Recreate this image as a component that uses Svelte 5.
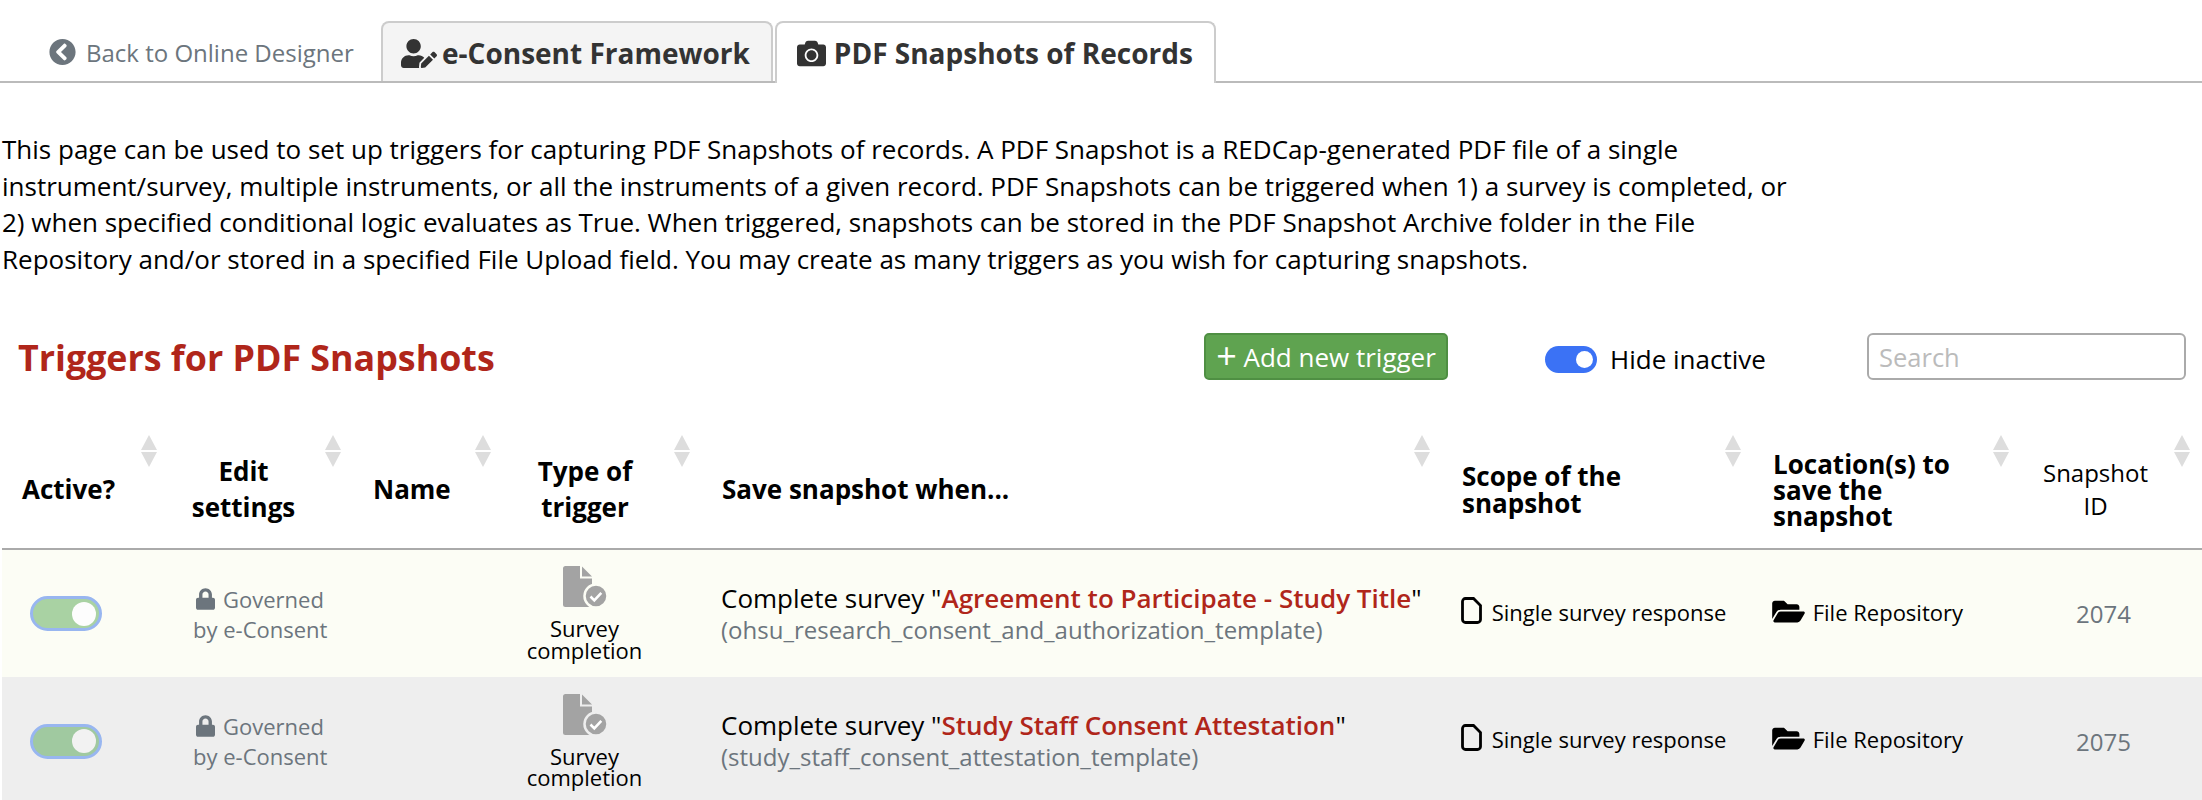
<script lang="ts">
	const headers = [
		{ label: 'Active?', cls: 'left' },
		{ label: 'Edit settings', cls: 'center' },
		{ label: 'Name', cls: 'left' },
		{ label: 'Type of trigger', cls: 'center' },
		{ label: 'Save snapshot when...', cls: 'left' },
		{ label: 'Scope of the snapshot', cls: 'left tight' },
		{ label: 'Location(s) to save the snapshot', cls: 'left tighter' },
		{ label: 'Snapshot ID', cls: 'center plain' }
	];

	const rows = [
		{ survey: 'Agreement to Participate - Study Title', form: 'ohsu_research_consent_and_authorization_template', id: 2074 },
		{ survey: 'Study Staff Consent Attestation', form: 'study_staff_consent_attestation_template', id: 2075 }
	];
</script>

<div class="page">
	<nav class="tabs">
		<a class="back" href="#back">
			<svg class="ic-back" viewBox="0 0 512 512"><path d="M256 504C119 504 8 393 8 256S119 8 256 8s248 111 248 248-111 248-248 248zM142.1 273l135.5 135.5c9.4 9.4 24.6 9.4 33.9 0l17-17c9.4-9.4 9.4-24.6 0-33.9L226.9 256l101.6-101.6c9.4-9.4 9.4-24.6 0-33.9l-17-17c-9.4-9.4-24.6-9.4-33.9 0L142.1 239c-9.4 9.4-9.4 24.6 0 34z"/></svg>
			Back to Online Designer
		</a>
		<a class="tab" href="#econsent">
			<svg class="ic-user" viewBox="0 0 640 512"><path d="M224 256c70.7 0 128-57.3 128-128S294.7 0 224 0 96 57.3 96 128s57.3 128 128 128zm89.6 32h-16.7c-22.2 10.2-46.9 16-72.9 16s-50.6-5.8-72.9-16h-16.7C60.2 288 0 348.2 0 422.4V464c0 26.5 21.5 48 48 48h274.9c-2.4-6.8-3.4-14-2.6-21.3l6.8-60.9 1.2-11.1 7.9-7.9 77.3-77.3c-24.5-27.7-60-45.5-99.9-45.5zm45.3 145.3l-6.8 61c-1.1 10.2 7.5 18.8 17.6 17.6l60.9-6.8 137.9-137.9-71.7-71.7-137.9 137.8zM633 268.9L595.1 231c-9.3-9.3-24.5-9.3-33.8 0l-37.8 37.8-4.1 4.1 71.8 71.7 41.8-41.8c9.3-9.4 9.3-24.5 0-33.9z"/></svg>
			e-Consent Framework
		</a>
		<a class="tab active" href="#snapshots">
			<svg class="ic-camera" viewBox="0 0 512 512"><path d="M512 144v288c0 26.5-21.5 48-48 48H48c-26.5 0-48-21.5-48-48V144c0-26.5 21.5-48 48-48h88l12.3-32.9c7-18.7 24.9-31.1 44.9-31.1h125.5c20 0 37.9 12.4 44.9 31.1L376 96h88c26.5 0 48 21.5 48 48zM376 288c0-66.2-53.8-120-120-120s-120 53.8-120 120 53.8 120 120 120 120-53.8 120-120zm-32 0c0 48.5-39.5 88-88 88s-88-39.5-88-88 39.5-88 88-88 88 39.5 88 88z"/></svg>
			PDF Snapshots of Records
		</a>
	</nav>

	<p class="intro">
		This page can be used to set up triggers for capturing PDF Snapshots of records. A PDF Snapshot is a REDCap-generated PDF file of a single<br />
		instrument/survey, multiple instruments, or all the instruments of a given record. PDF Snapshots can be triggered when 1) a survey is completed, or<br />
		2) when specified conditional logic evaluates as True. When triggered, snapshots can be stored in the PDF Snapshot Archive folder in the File<br />
		Repository and/or stored in a specified File Upload field. You may create as many triggers as you wish for capturing snapshots.
	</p>

	<div class="toolbar">
		<h1>Triggers for PDF Snapshots</h1>
		<button class="add"><span class="plus">+</span> Add new trigger</button>
		<div class="hide">
			<span class="switch"></span>
			<span>Hide inactive</span>
		</div>
		<input class="search" placeholder="Search" />
	</div>

	<table>
		<colgroup>
			<col style="width:167px" />
			<col style="width:184px" />
			<col style="width:150px" />
			<col style="width:199px" />
			<col style="width:740px" />
			<col style="width:311px" />
			<col style="width:268px" />
			<col style="width:181px" />
		</colgroup>
		<thead>
			<tr>
				{#each headers as h}
					<th class={h.cls}>
						<span>{h.label}</span>
						<i class="sort"><b class="up"></b><b class="down"></b></i>
					</th>
				{/each}
			</tr>
		</thead>
		<tbody>
			{#each rows as r, i}
				<tr class:even={i % 2 === 1}>
					<td><span class="toggle"></span></td>
					<td class="gov">
						<div class="gov-line">
							<svg class="ic-lock" viewBox="0 0 448 512"><path d="M400 224h-24v-72C376 68.2 307.8 0 224 0S72 68.2 72 152v72H48c-26.5 0-48 21.5-48 48v192c0 26.5 21.5 48 48 48h352c26.5 0 48-21.5 48-48V272c0-26.5-21.5-48-48-48zm-104 0H152v-72c0-39.7 32.3-72 72-72s72 32.3 72 72v72z"/></svg>
							Governed
						</div>
						<div>by e-Consent</div>
					</td>
					<td></td>
					<td class="type">
						<svg class="ic-survey" viewBox="0 0 44 41">
							<path class="doc" d="M2.5 0H17v12.5h12V41H2.500a2.500 2.500 0 0 1-2.500-2.500V2.500A2.500 2.500 0 0 1 2.500 0z" />
							<path class="doc" d="M19 0.500l10 10H19z" />
							<circle class="doc ring" cx="33" cy="30" r="11.500" />
							<path class="tick" d="M27.500 30.500l3.800 3.800 7-7.500" />
						</svg>
						<div class="type-label">Survey<br />completion</div>
					</td>
					<td class="when">
						<div>Complete survey "<strong>{r.survey}</strong>"</div>
						<div class="form">({r.form})</div>
					</td>
					<td class="scope">
						<svg class="ic-file" viewBox="0 0 21 27"><path d="M4.500 1.500h8l7 7v14a3 3 0 0 1-3 3h-12a3 3 0 0 1-3-3v-18a3 3 0 0 1 3-3z" /></svg>
						Single survey response
					</td>
					<td class="scope">
						<svg class="ic-folder" viewBox="0 0 576 512"><path d="M572.694 292.093L500.27 416.248A63.997 63.997 0 0 1 444.989 448H45.025c-18.523 0-30.064-20.093-20.731-36.093l72.424-124.155A64 64 0 0 1 152 256h399.964c18.523 0 30.064 20.093 20.73 36.093zM152 224h328v-48c0-26.51-21.49-48-48-48H272l-64-64H48C21.49 64 0 85.49 0 112v278.046l69.077-118.418C86.214 242.25 117.989 224 152 224z"/></svg>
						File Repository
					</td>
					<td class="id">{r.id}</td>
				</tr>
			{/each}
		</tbody>
	</table>
</div>

<style>
	:global(body) {
		margin: 0;
		background: #fff;
		font-family: 'Open Sans', sans-serif;
		color: #000;
		overflow: hidden;
	}
	.page {
		width: 2202px;
		height: 800px;
		overflow: hidden;
	}

	/* tabs */
	.tabs {
		display: flex;
		align-items: flex-end;
		height: 60px;
		padding: 21px 0 0 2px;
		box-sizing: content-box;
		border-bottom: 2px solid #bbb;
	}
	.back {
		display: flex;
		align-items: center;
		height: 60px;
		width: 379px;
		padding: 2px 0 0 47px;
		box-sizing: border-box;
		font-size: 24px;
		color: #6c757d;
		text-decoration: none;
		gap: 10px;
	}
	.ic-back { width: 27px; height: 28px; fill: #6c757d; }
	.tab {
		display: flex;
		align-items: center;
		gap: 5px;
		height: 60px;
		box-sizing: border-box;
		margin-right: 2px;
		padding: 2px 21px 0 18px;
		border: 2px solid #ccc;
		border-bottom: 0;
		border-radius: 8px 8px 0 0;
		background: #f4f4f4;
		font-size: 28px;
		font-weight: 700;
		color: #333;
		text-decoration: none;
	}
	.tab.active {
		gap: 8px;
		background: #fff;
		height: 62px;
		margin-bottom: -2px;
		padding: 0 21px 0 20px;
	}
	.ic-user { width: 36px; height: 29px; fill: #333; }
	.ic-camera { width: 29px; height: 29px; fill: #333; }

	.intro {
		margin: 48px 0 0 2px;
		font-size: 26px;
		line-height: 36.6px;
		white-space: nowrap;
	}

	.toolbar {
		display: flex;
		align-items: center;
		height: 47px;
		margin-top: 56px;
		padding-left: 18px;
	}
	h1 {
		margin: 0;
		width: 1186px;
		font-size: 35.800px;
		font-weight: 700;
		color: #b0261a;
		white-space: nowrap;
	}
	.add {
		width: 244px;
		height: 47px;
		padding: 0;
		border: 2px solid #4f8f43;
		border-radius: 5px;
		background: #5fa350;
		color: #fff;
		font: 400 26px 'Open Sans', sans-serif;
		white-space: nowrap;
	}
	.plus { font-size: 36px; line-height: 1; vertical-align: -2px; }
	.hide {
		display: flex;
		align-items: center;
		gap: 13px;
		width: 322px;
		margin-left: 97px;
		padding-top: 5px;
		font-size: 26px;
	}
	.switch {
		position: relative;
		width: 52px;
		height: 27px;
		border-radius: 14px;
		background: #3b72f5;
	}
	.switch::after {
		content: '';
		position: absolute;
		right: 4px;
		top: 5px;
		width: 17px;
		height: 17px;
		border-radius: 50%;
		background: #fff;
	}
	.search {
		width: 319px;
		height: 47px;
		box-sizing: border-box;
		padding: 0 10px;
		border: 2px solid #aaa;
		border-radius: 6px;
		font: 400 25.500px 'Open Sans', sans-serif;
		outline: 0;
	}
	.search::placeholder { color: #bbb; }

	/* table */
	table {
		width: 2200px;
		margin: 52px 0 0 2px;
		border-collapse: collapse;
		table-layout: fixed;
	}
	th {
		position: relative;
		height: 117px;
		padding: 0 55px 2px 20px;
		box-sizing: border-box;
		border-bottom: 2px solid #aaa;
		font-size: 26px;
		line-height: 36px;
		font-weight: 700;
		vertical-align: middle;
	}
	th.left { text-align: left; }
	th.center { text-align: center; }
	th.tight { line-height: 27px; padding: 0 40px 0 20px; }
	th.tighter { line-height: 26px; padding: 0 40px 0 20px; }
	th.plain { font-weight: 400; font-size: 24px; line-height: 33px; padding-right: 52px; }
	.sort {
		position: absolute;
		top: 3px;
		right: 12px;
		display: flex;
		flex-direction: column;
		gap: 2px;
	}
	.sort b {
		width: 0;
		height: 0;
		border-left: 8px solid transparent;
		border-right: 8px solid transparent;
	}
	.up { border-bottom: 15px solid #ddd; }
	.down { border-top: 15px solid #ddd; }

	td {
		height: 128px;
		padding: 0 19px;
		box-sizing: border-box;
		vertical-align: middle;
		background: #fcfdf5;
	}
	tr.even td { background: #eee; }
	.toggle {
		position: relative;
		display: block;
		width: 72px;
		height: 35px;
		margin-left: 9px;
		box-sizing: border-box;
		border: 3px solid #98b6f0;
		border-radius: 18px;
		background: #a9d2a3;
	}
	tr.even .toggle { background: #a0c9a0; }
	.toggle::after {
		content: '';
		position: absolute;
		right: 3px;
		top: 2.500px;
		width: 24px;
		height: 24px;
		border-radius: 50%;
		background: #fdfdfd;
	}
	tr.even .toggle::after { background: #f2f2f2; }
	.gov {
		padding: 0 0 0 24px;
		color: #6c757d;
		font-size: 22px;
		line-height: 30px;
		white-space: nowrap;
	}
	.gov-line { display: flex; align-items: center; gap: 8px; padding-left: 3px; }
	.ic-lock { width: 19px; height: 22px; fill: #6c757d; }
	.type { padding: 0 36px 0 0; text-align: center; }
	.ic-survey { display: block; width: 44px; height: 41px; margin: 0 auto; overflow: visible; }
	.doc { fill: #a3a3a3; }
	.ring { stroke: #fcfdf5; stroke-width: 2.500; }
	tr.even .ring { stroke: #eee; }
	.tick { fill: none; stroke: #fff; stroke-width: 2.600; }
	.type-label { margin-top: 11px; font-size: 22px; line-height: 21.500px; }
	.when { font-size: 26px; line-height: 32px; }
	.when strong { color: #b0261a; font-weight: 600; }
	.form { color: #6c757d; font-size: 24px; }
	.scope { padding-bottom: 4px; font-size: 22px; white-space: nowrap; }
	.ic-file { width: 21px; height: 27px; vertical-align: -3px; margin-right: 4px; fill: none; stroke: #000; stroke-width: 2.800; }
	.ic-folder { width: 33px; height: 29px; vertical-align: -5px; margin-right: 2px; fill: #000; }
	.id { padding: 0 16px 0 0; text-align: center; color: #6c757d; font-size: 24px; }
</style>
